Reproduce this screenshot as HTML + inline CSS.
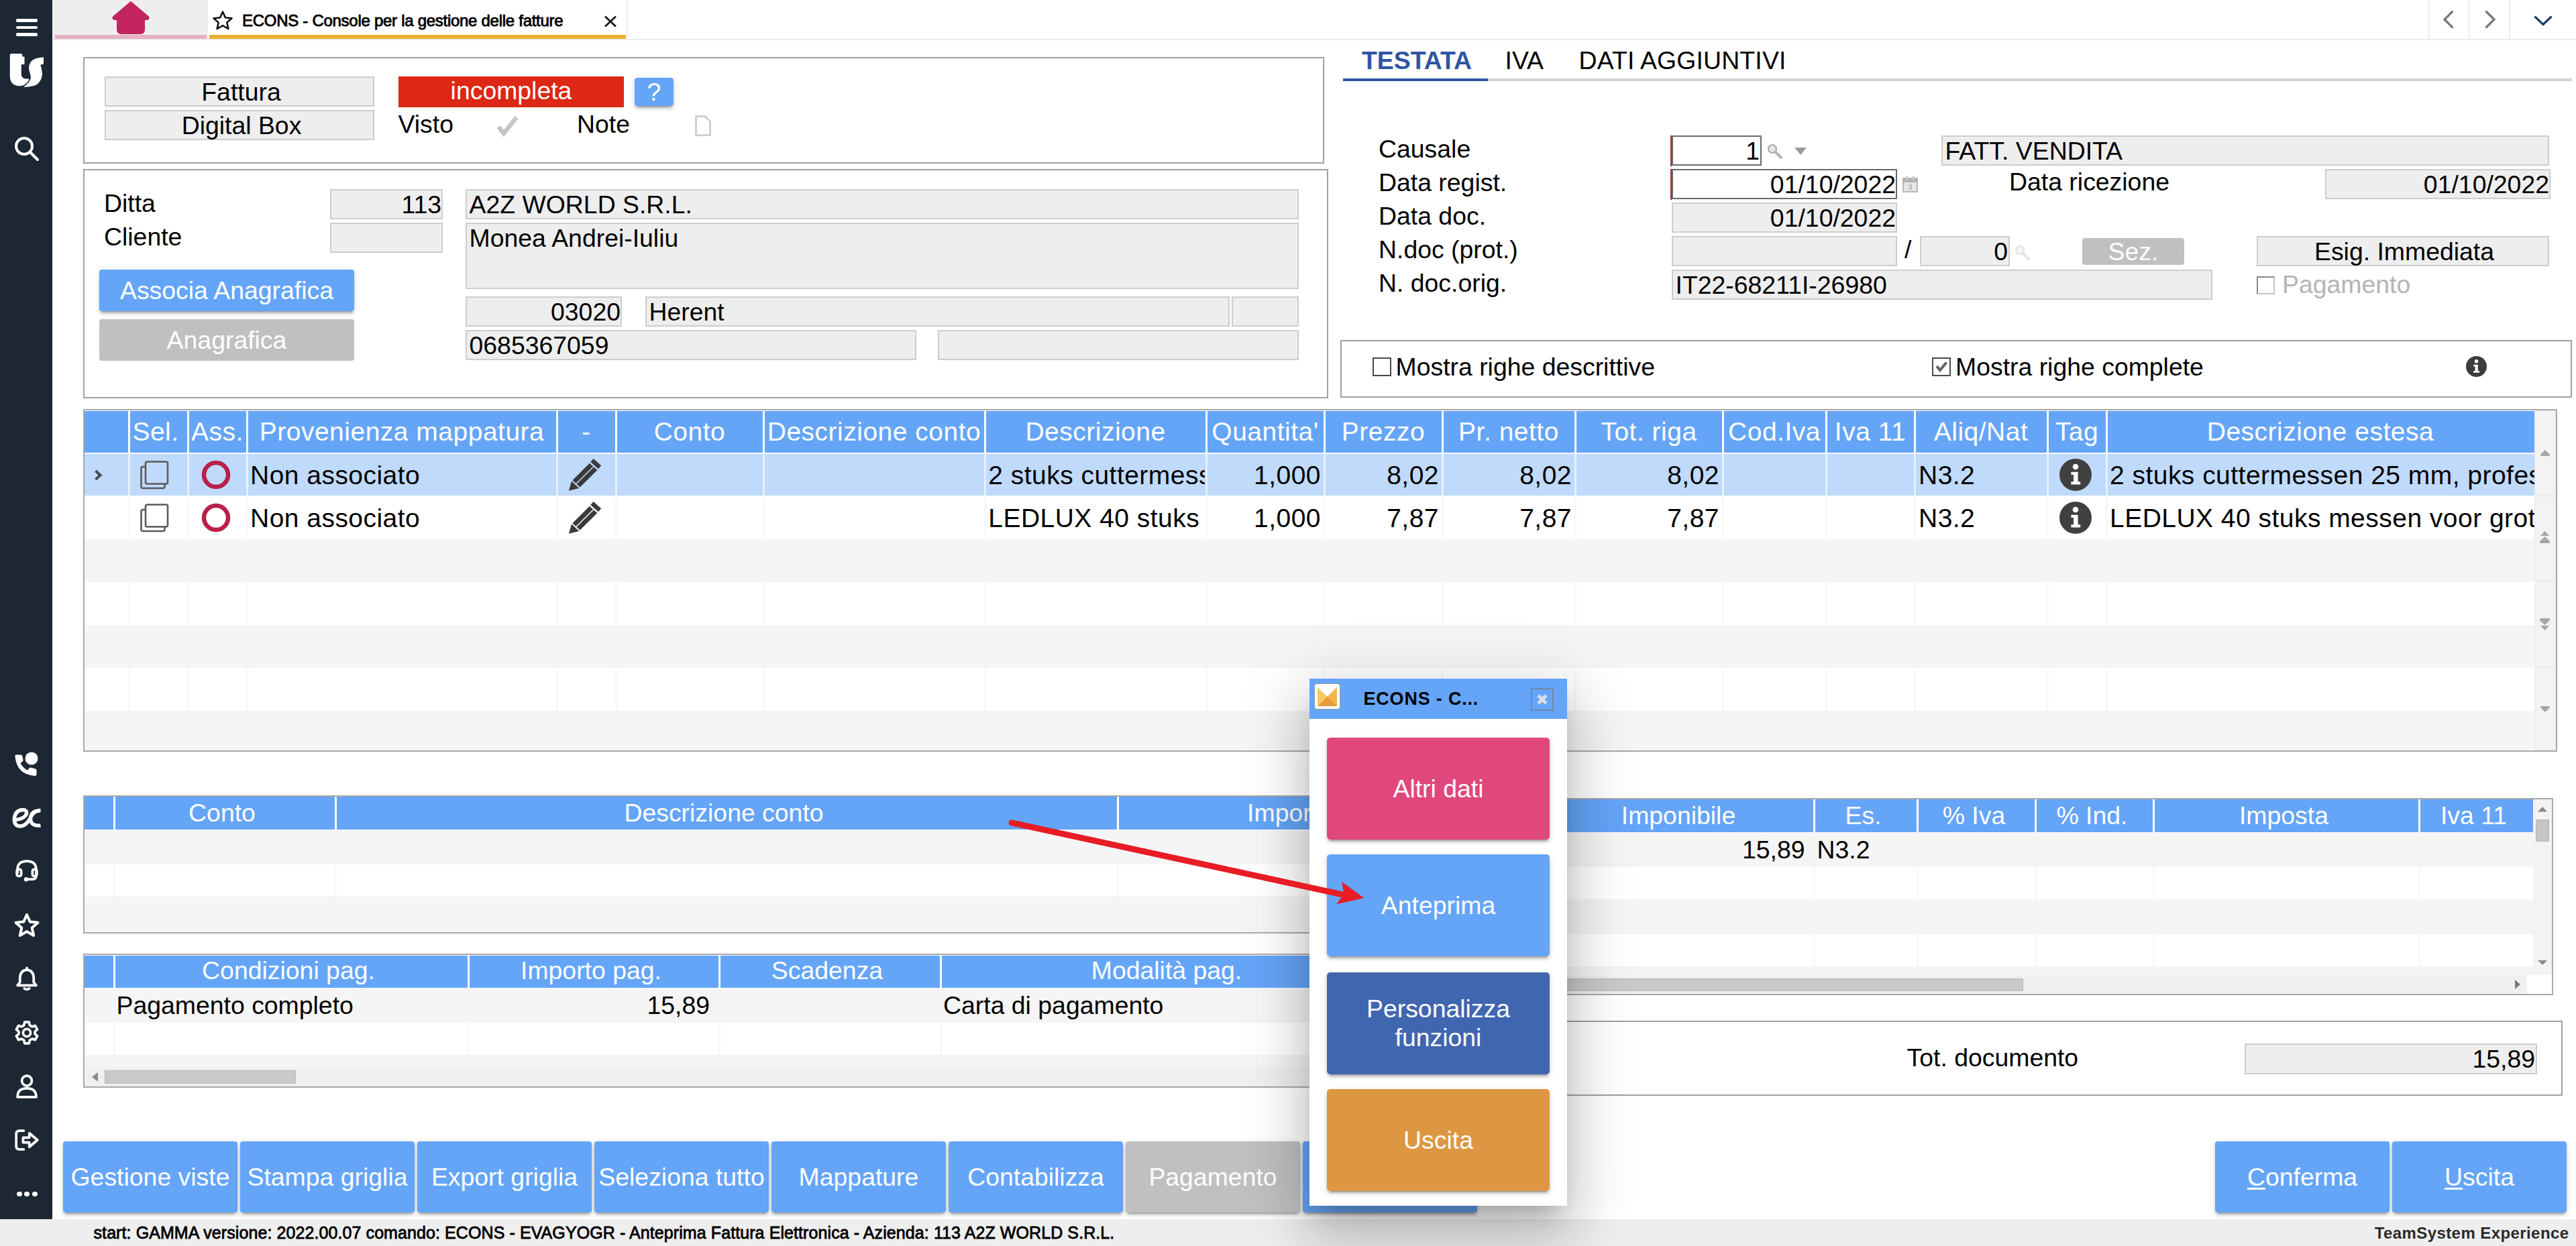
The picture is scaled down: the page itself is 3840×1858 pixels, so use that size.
<!DOCTYPE html>
<html><head><meta charset="utf-8"><title>ECONS</title>
<style>
html,body{margin:0;padding:0;}
body{width:3840px;height:1858px;position:relative;overflow:hidden;background:#fff;font-family:"Liberation Sans",sans-serif;}
div{position:absolute;box-sizing:border-box;}
.t{white-space:nowrap;}
svg{position:absolute;overflow:visible;}
.btn{background:#65a5f8;color:#fff;border-radius:4px;box-shadow:0 6px 2px -4px rgba(0,0,0,.2),0 4px 4px 0 rgba(0,0,0,.14),0 2px 10px 0 rgba(0,0,0,.12);text-align:center;white-space:nowrap;}
</style></head><body>
<div style="left:78px;top:0px;width:3762px;height:58px;background:#fff;"></div>
<div style="left:78px;top:58px;width:3762px;height:2px;background:#ececec;"></div>
<div style="left:78px;top:0px;width:232px;height:58px;background:#eeeeee;"></div>
<div style="left:82px;top:52px;width:226px;height:6px;background:#e4b1c5;"></div>
<svg style="left:166px;top:0px" width="58" height="52" viewBox="0 0 58 52"><path d="M29 3 L55 25 Q57 28 53 29 L49 29 L49 44 Q49 50 43 50 L15 50 Q9 50 9 44 L9 29 L5 29 Q1 28 3 25 Z" fill="#c2255f" stroke="#c2255f" stroke-width="2" stroke-linejoin="round"/></svg>
<div style="left:312px;top:52px;width:621px;height:6px;background:#e9b030;"></div>
<div style="left:934px;top:0px;width:2px;height:58px;background:#f0f0f0;"></div>
<svg style="left:316px;top:15px" width="32" height="30" viewBox="0 0 32 30"><path d="M16 2.5 L19.9 11.2 L29.5 12.2 L22.3 18.6 L24.4 28 L16 23.1 L7.6 28 L9.7 18.6 L2.5 12.2 L12.1 11.2 Z" fill="none" stroke="#111" stroke-width="2.6" stroke-linejoin="round"/></svg>
<div class="t" style="left:361px;top:18.6px;font-size:24px;line-height:24px;color:#000;letter-spacing:-0.28px;-webkit-text-stroke:0.85px #000;">ECONS - Console per la gestione delle fatture</div>
<svg style="left:900px;top:23px" width="20" height="18" viewBox="0 0 20 18"><path d="M2 1.5 L18 16.5 M18 1.5 L2 16.5" stroke="#111" stroke-width="2.6" fill="none"/></svg>
<div style="left:3620px;top:0px;width:2px;height:58px;background:#eeeeee;"></div>
<div style="left:3680px;top:0px;width:2px;height:58px;background:#eeeeee;"></div>
<div style="left:3740px;top:0px;width:2px;height:58px;background:#eeeeee;"></div>
<svg style="left:3640px;top:14px" width="20" height="30" viewBox="0 0 20 30"><path d="M15.5 3.5 L4 15 L15.5 26.5" stroke="#777" stroke-width="3.2" stroke-linecap="round" fill="none"/></svg>
<svg style="left:3702px;top:14px" width="20" height="30" viewBox="0 0 20 30"><path d="M4.5 3.5 L16 15 L4.5 26.5" stroke="#777" stroke-width="3.2" stroke-linecap="round" fill="none"/></svg>
<svg style="left:3776px;top:22px" width="30" height="18" viewBox="0 0 30 18"><path d="M3.5 3.5 L15 14.5 L26.5 3.5" stroke="#1f4166" stroke-width="3.4" stroke-linecap="round" fill="none"/></svg>
<div style="left:0px;top:0px;width:78px;height:1818px;background:#1c2733;"></div>
<div style="left:24px;top:28px;width:32px;height:4.5px;background:#fff;border-radius:2px;"></div>
<div style="left:24px;top:38.5px;width:32px;height:4.5px;background:#fff;border-radius:2px;"></div>
<div style="left:24px;top:49px;width:32px;height:4.5px;background:#fff;border-radius:2px;"></div>
<svg style="left:0px;top:60px" width="100" height="90" viewBox="0 0 100 90"><path d="M16.5 20 L31.5 20 Q33.2 20 33.2 21.7 L33.2 24.6 L36.5 24.6 L36.5 36 L31.8 36 L31.8 50 Q31.8 57 38 57.5 L43.5 57.5 Q42 64 34 67.5 Q30 68.5 26 68 Q15 66 14.8 54 L14.8 22 Q14.8 20 16.5 20 Z" fill="#fff"/><path d="M65 25.3 L65 35.5 L60.3 36.8 Q62.5 43 63 50 Q62.5 60 55 66 Q47 70 34.7 69.7 Q44 64 46 56 Q45.5 50 43.5 45 Q42 38 46 32 Q51 26 65 25.3 Z" fill="#fff"/></svg>
<svg style="left:20px;top:202px" width="40" height="40" viewBox="0 0 40 40"><circle cx="16" cy="16" r="12" fill="none" stroke="#fff" stroke-width="4" stroke-linecap="round" stroke-linejoin="round"/><path d="M25 25 L36 36" fill="none" stroke="#fff" stroke-width="4" stroke-linecap="round" stroke-linejoin="round"/></svg>
<svg style="left:0px;top:1100px" width="100" height="80" viewBox="0 0 100 80"><path d="M22.5 28 Q22 25.5 24.5 25.5 L31 25.5 Q33 25.5 33.3 27.5 L34.5 33 Q34.8 34.5 33.5 35.5 L30.5 38 Q34 45 41 48.5 L43.5 45.5 Q44.5 44.3 46 44.7 L52.5 46.3 Q54.5 46.8 54.5 48.8 L54.5 54.5 Q54.5 57 52 57 Q25 55 22.5 28 Z" fill="#fff"/><circle cx="47" cy="31" r="9.5" fill="#fff"/></svg>
<svg style="left:0px;top:1190px" width="100" height="60" viewBox="0 0 100 60"><path d="M23 32.5 Q37 31 39.5 23.5 Q40.5 17.5 33.5 17.5 Q22.5 18.5 21.2 31 Q21.2 42 30 42 Q38 42 44 32 Q49 20 59.5 18.2" fill="none" stroke="#fff" stroke-width="5.4" stroke-linecap="butt"/><path d="M60.5 19 Q46 18 45.5 31 Q46 42.5 60.5 41" fill="none" stroke="#fff" stroke-width="5.4"/></svg>
<svg style="left:20px;top:1280px" width="40" height="40" viewBox="-1.5 -1.5 43 43"><path d="M5 22 L5 17 Q5 3 20 3 Q35 3 35 17 L35 26 Q35 32 29 32 L22 32" fill="none" stroke="#fff" stroke-width="4" stroke-linecap="round" stroke-linejoin="round"/><rect x="4" y="16" width="7" height="11" rx="3" fill="none" stroke="#fff" stroke-width="4" stroke-linecap="round" stroke-linejoin="round"/><rect x="29" y="16" width="7" height="11" rx="3" fill="none" stroke="#fff" stroke-width="4" stroke-linecap="round" stroke-linejoin="round"/><circle cx="19" cy="32" r="3.5" fill="#fff"/></svg>
<svg style="left:20px;top:1360px" width="40" height="40" viewBox="0 0 40 40"><path d="M20 4 L24.8 14.6 L36.5 15.8 L27.7 23.6 L30.2 35 L20 29.1 L9.8 35 L12.3 23.6 L3.5 15.8 L15.2 14.6 Z" fill="none" stroke="#fff" stroke-width="4" stroke-linecap="round" stroke-linejoin="round"/></svg>
<svg style="left:20px;top:1440px" width="40" height="40" viewBox="-1.5 -1.5 43 43"><path d="M20 5 Q9 6 9 19 L9 25 L5 30 L35 30 L31 25 L31 19 Q31 6 20 5 Z" fill="none" stroke="#fff" stroke-width="4" stroke-linecap="round" stroke-linejoin="round"/><path d="M16 35 Q20 38 24 35" fill="none" stroke="#fff" stroke-width="4" stroke-linecap="round" stroke-linejoin="round"/><path d="M20 2 L20 5" fill="none" stroke="#fff" stroke-width="4" stroke-linecap="round" stroke-linejoin="round"/></svg>
<svg style="left:20px;top:1520px" width="40" height="40" viewBox="-1.5 -1.5 43 43"><path d="M16.5 3 L23.5 3 L24.6 8 L28.4 10.2 L33.3 8.6 L36.8 14.7 L33 18 L33 22 L36.8 25.3 L33.3 31.4 L28.4 29.8 L24.6 32 L23.5 37 L16.5 37 L15.4 32 L11.6 29.8 L6.7 31.4 L3.2 25.3 L7 22 L7 18 L3.2 14.7 L6.7 8.6 L11.6 10.2 L15.4 8 Z" fill="none" stroke="#fff" stroke-width="4" stroke-linecap="round" stroke-linejoin="round"/><circle cx="20" cy="20" r="6" fill="none" stroke="#fff" stroke-width="4" stroke-linecap="round" stroke-linejoin="round"/></svg>
<svg style="left:20px;top:1600px" width="40" height="40" viewBox="-1.5 -1.5 43 43"><circle cx="20" cy="11" r="8" fill="none" stroke="#fff" stroke-width="4" stroke-linecap="round" stroke-linejoin="round"/><path d="M5 37 Q5 23 20 23 Q35 23 35 37 Z" fill="none" stroke="#fff" stroke-width="4" stroke-linecap="round" stroke-linejoin="round"/></svg>
<svg style="left:20px;top:1680px" width="40" height="40" viewBox="-1.5 -1.5 43 43"><path d="M15 5 L8 5 Q3 5 3 10 L3 30 Q3 35 8 35 L15 35" fill="none" stroke="#fff" stroke-width="4" stroke-linecap="round" stroke-linejoin="round"/><path d="M14 16 L24 16 L24 9 L37 20 L24 31 L24 24 L14 24 Z" fill="none" stroke="#fff" stroke-width="4" stroke-linecap="round" stroke-linejoin="round"/></svg>
<div style="left:25px;top:1776.6px;width:7.6px;height:7.6px;background:#fff;border-radius:4px;"></div>
<div style="left:36.4px;top:1776.6px;width:7.6px;height:7.6px;background:#fff;border-radius:4px;"></div>
<div style="left:48px;top:1776.6px;width:7.6px;height:7.6px;background:#fff;border-radius:4px;"></div>
<div style="left:0px;top:1818px;width:3840px;height:40px;background:#eeeeee;"></div>
<div class="t" style="left:139.5px;top:1825.8px;font-size:25px;line-height:25px;color:#000;letter-spacing:0.09px;-webkit-text-stroke:0.8px #000;">start: GAMMA versione: 2022.00.07 comando: ECONS - EVAGYOGR - Anteprima Fattura Elettronica - Azienda: 113 A2Z WORLD S.R.L.</div>
<div class="t" style="left:3400px;top:1826.5px;font-size:24px;line-height:24px;color:#2a2a2a;width:429.5px;text-align:right;font-weight:bold;letter-spacing:0.42px;">TeamSystem Experience</div>
<div style="left:124px;top:85px;width:1850px;height:159px;border:2px solid #a0a0a0;"></div>
<div style="left:156px;top:114px;width:402px;height:45px;background:#eee;border:2px solid #cdcdcd;box-sizing:border-box;"></div>
<div class="t" style="left:158.5px;top:118.5px;font-size:37.4px;line-height:37.4px;color:#000;width:402px;text-align:center;">Fattura</div>
<div style="left:156px;top:164px;width:402px;height:45px;background:#eee;border:2px solid #cdcdcd;box-sizing:border-box;"></div>
<div class="t" style="left:159px;top:168.5px;font-size:37.4px;line-height:37.4px;color:#000;width:402px;text-align:center;">Digital Box</div>
<div style="left:594px;top:114px;width:336px;height:46px;background:#dc2814;"></div>
<div class="t" style="left:594px;top:117px;font-size:37.4px;line-height:37.4px;color:#fff;width:336px;text-align:center;">incompleta</div>
<div class="btn" style="left:946px;top:116px;width:58px;height:42px;border-radius:4px;"></div>
<div class="t" style="left:946px;top:118.5px;font-size:37.4px;line-height:37.4px;color:#fff;width:58px;text-align:center;">?</div>
<div class="t" style="left:593.5px;top:167px;font-size:37.4px;line-height:37.4px;color:#000;">Visto</div>
<svg style="left:741px;top:172px" width="32" height="30" viewBox="0 0 32 30"><path d="M2 17 L10 27 L29 3" stroke="#c4c4c4" stroke-width="6.5" fill="none"/></svg>
<div class="t" style="left:860px;top:167px;font-size:37.4px;line-height:37.4px;color:#000;">Note</div>
<svg style="left:1036px;top:172px" width="24" height="31" viewBox="0 0 24 31"><path d="M1.5 1.5 L15 1.5 L22.5 9 L22.5 29.5 L1.5 29.5 Z" fill="#fff" stroke="#d0d0d0" stroke-width="3"/></svg>
<div style="left:124px;top:252px;width:1856px;height:342px;border:2px solid #a0a0a0;"></div>
<div class="t" style="left:155px;top:285px;font-size:37.4px;line-height:37.4px;color:#000;">Ditta</div>
<div class="t" style="left:155px;top:335px;font-size:37.4px;line-height:37.4px;color:#000;">Cliente</div>
<div style="left:492px;top:282px;width:168px;height:45px;background:#eee;border:2px solid #cdcdcd;box-sizing:border-box;"></div>
<div class="t" style="left:492px;top:286.5px;font-size:37.4px;line-height:37.4px;color:#000;width:166px;text-align:right;">113</div>
<div style="left:492px;top:332px;width:168px;height:45px;background:#eee;border:2px solid #cdcdcd;box-sizing:border-box;"></div>
<div style="left:694px;top:282px;width:1242px;height:45px;background:#eee;border:2px solid #cdcdcd;box-sizing:border-box;"></div>
<div class="t" style="left:699.5px;top:286.5px;font-size:37.4px;line-height:37.4px;color:#000;">A2Z WORLD S.R.L.</div>
<div style="left:694px;top:332px;width:1242px;height:99px;background:#eee;border:2px solid #cdcdcd;box-sizing:border-box;"></div>
<div class="t" style="left:699.5px;top:336.5px;font-size:37.4px;line-height:37.4px;color:#000;">Monea Andrei-Iuliu</div>
<div style="left:694px;top:442px;width:233px;height:45px;background:#eee;border:2px solid #cdcdcd;box-sizing:border-box;"></div>
<div class="t" style="left:694px;top:446.5px;font-size:37.4px;line-height:37.4px;color:#000;width:231px;text-align:right;">03020</div>
<div style="left:962px;top:442px;width:871px;height:45px;background:#eee;border:2px solid #cdcdcd;box-sizing:border-box;"></div>
<div class="t" style="left:967.5px;top:446.5px;font-size:37.4px;line-height:37.4px;color:#000;">Herent</div>
<div style="left:1836px;top:442px;width:100px;height:45px;background:#eee;border:2px solid #cdcdcd;box-sizing:border-box;"></div>
<div style="left:694px;top:492px;width:672px;height:45px;background:#eee;border:2px solid #cdcdcd;box-sizing:border-box;"></div>
<div class="t" style="left:699.5px;top:496.5px;font-size:37.4px;line-height:37.4px;color:#000;">0685367059</div>
<div style="left:1398px;top:492px;width:538px;height:45px;background:#eee;border:2px solid #cdcdcd;box-sizing:border-box;"></div>
<div class="btn" style="left:148px;top:402px;width:380px;height:62px;"></div>
<div class="t" style="left:148px;top:414.5px;font-size:37.4px;line-height:37.4px;color:#fff;width:380px;text-align:center;">Associa Anagrafica</div>
<div class="btn" style="left:148px;top:476px;width:380px;height:62px;background:#c0c0c0;box-shadow:none;"></div>
<div class="t" style="left:148px;top:489px;font-size:37.4px;line-height:37.4px;color:#fff;width:380px;text-align:center;">Anagrafica</div>
<div class="t" style="left:2030px;top:72.3px;font-size:37.4px;line-height:37.4px;color:#2f55a4;font-weight:bold;">TESTATA</div>
<div class="t" style="left:2243.5px;top:72.3px;font-size:37.4px;line-height:37.4px;color:#000;">IVA</div>
<div class="t" style="left:2353.5px;top:72.3px;font-size:37.4px;line-height:37.4px;color:#000;letter-spacing:0.15px;">DATI AGGIUNTIVI</div>
<div style="left:2002px;top:117px;width:1832px;height:4px;background:#d2d2d2;"></div>
<div style="left:2002px;top:117px;width:216px;height:4px;background:#2f55a4;"></div>
<div class="t" style="left:2055px;top:204px;font-size:37.4px;line-height:37.4px;color:#000;">Causale</div>
<div class="t" style="left:2055px;top:254.4px;font-size:37.4px;line-height:37.4px;color:#000;">Data regist.</div>
<div class="t" style="left:2055px;top:304px;font-size:37.4px;line-height:37.4px;color:#000;">Data doc.</div>
<div class="t" style="left:2055px;top:354px;font-size:37.4px;line-height:37.4px;color:#000;">N.doc (prot.)</div>
<div class="t" style="left:2055px;top:404px;font-size:37.4px;line-height:37.4px;color:#000;">N. doc.orig.</div>
<div style="left:2490px;top:202px;width:1.5px;height:46px;background:#a83232;"></div>
<div style="left:2492px;top:202px;width:134px;height:45px;background:#fff;border:2px solid #6a6a6a;"></div>
<div class="t" style="left:2492px;top:206.5px;font-size:37.4px;line-height:37.4px;color:#000;width:131px;text-align:right;">1</div>
<svg style="left:2634px;top:214px" width="24" height="24" viewBox="0 0 24 24"><circle cx="8" cy="8" r="6" fill="#e8e8e8" stroke="#aaa" stroke-width="2.2"/><path d="M13 13 L21 21" stroke="#b5b5b5" stroke-width="4" stroke-linecap="round"/></svg>
<svg style="left:2674px;top:219px" width="20" height="13" viewBox="0 0 20 13"><path d="M1 1 L19 1 L10 12 Z" fill="#9a9a9a"/></svg>
<div style="left:2894px;top:202px;width:906px;height:45px;background:#eee;border:2px solid #cdcdcd;box-sizing:border-box;"></div>
<div class="t" style="left:2899.5px;top:206.5px;font-size:37.4px;line-height:37.4px;color:#000;">FATT. VENDITA</div>
<div style="left:2490px;top:252px;width:1.5px;height:46px;background:#a83232;"></div>
<div style="left:2492px;top:252px;width:336px;height:45px;background:#fff;border:2px solid #6a6a6a;"></div>
<div class="t" style="left:2492px;top:256.5px;font-size:37.4px;line-height:37.4px;color:#000;width:334px;text-align:right;">01/10/2022</div>
<svg style="left:2836px;top:263px" width="23" height="24" viewBox="0 0 23 24"><rect x="1" y="3" width="21" height="20" fill="#e6e6e6" stroke="#b8b8b8" stroke-width="2"/><rect x="1" y="3" width="21" height="6" fill="#b0b0b0"/><rect x="5" y="0" width="3" height="6" fill="#c8c8c8"/><rect x="15" y="0" width="3" height="6" fill="#c8c8c8"/><text x="11.5" y="20" font-size="11" font-weight="bold" text-anchor="middle" fill="#b0b0b0" font-family="Liberation Sans">3</text></svg>
<div class="t" style="left:2995px;top:252.7px;font-size:37.4px;line-height:37.4px;color:#000;">Data ricezione</div>
<div style="left:3466px;top:252px;width:336px;height:45px;background:#eee;border:2px solid #cdcdcd;box-sizing:border-box;"></div>
<div class="t" style="left:3466px;top:256.5px;font-size:37.4px;line-height:37.4px;color:#000;width:334px;text-align:right;">01/10/2022</div>
<div style="left:2492px;top:302px;width:336px;height:45px;background:#eee;border:2px solid #cdcdcd;box-sizing:border-box;"></div>
<div class="t" style="left:2492px;top:306.5px;font-size:37.4px;line-height:37.4px;color:#000;width:334px;text-align:right;">01/10/2022</div>
<div style="left:2492px;top:352px;width:336px;height:45px;background:#eee;border:2px solid #cdcdcd;box-sizing:border-box;"></div>
<div class="t" style="left:2839px;top:354px;font-size:37.4px;line-height:37.4px;color:#000;">/</div>
<div style="left:2862px;top:352px;width:134px;height:45px;background:#eee;border:2px solid #cdcdcd;box-sizing:border-box;"></div>
<div class="t" style="left:2862px;top:356.5px;font-size:37.4px;line-height:37.4px;color:#000;width:131px;text-align:right;">0</div>
<svg style="left:3003px;top:365px" width="24" height="24" viewBox="0 0 24 24"><circle cx="8" cy="8" r="6" fill="#f4f4f4" stroke="#e2e2e2" stroke-width="2.2"/><path d="M13 13 L21 21" stroke="#e4e4e4" stroke-width="4" stroke-linecap="round"/></svg>
<div style="left:3104px;top:354.5px;width:152px;height:40px;background:#c0c0c0;border-radius:4px;"></div>
<div class="t" style="left:3104px;top:357px;font-size:37.4px;line-height:37.4px;color:#fff;width:152px;text-align:center;">Sez.</div>
<div style="left:3364px;top:352px;width:436px;height:45px;background:#eee;border:2px solid #cdcdcd;box-sizing:border-box;"></div>
<div class="t" style="left:3366px;top:356.5px;font-size:37.4px;line-height:37.4px;color:#000;width:436px;text-align:center;">Esig. Immediata</div>
<div style="left:2492px;top:402px;width:806px;height:45px;background:#eee;border:2px solid #cdcdcd;box-sizing:border-box;"></div>
<div class="t" style="left:2497.5px;top:406.5px;font-size:37.4px;line-height:37.4px;color:#000;">IT22-68211I-26980</div>
<div style="left:3364px;top:411.5px;width:27px;height:27px;background:#fff;border:2px solid #c4c4c4;border-top-color:#888;border-left-color:#888;"></div>
<div class="t" style="left:3402px;top:406px;font-size:37.4px;line-height:37.4px;color:#b4b4b4;">Pagamento</div>
<div style="left:1998px;top:507px;width:1836px;height:86px;border:2px solid #a0a0a0;"></div>
<div style="left:2046px;top:533px;width:28px;height:27.5px;background:#fff;border:2px solid #4a4a4a;"></div>
<div class="t" style="left:2080.5px;top:529px;font-size:37.4px;line-height:37.4px;color:#000;">Mostra righe descrittive</div>
<div style="left:2880px;top:533px;width:28px;height:27.5px;background:#fff;border:2px solid #4a4a4a;"></div>
<svg style="left:2880px;top:533px" width="28" height="27" viewBox="0 0 28 27"><path d="M7 13 L12 19 L21.5 7.5" stroke="#666" stroke-width="4.2" fill="none"/></svg>
<div class="t" style="left:2915px;top:529px;font-size:37.4px;line-height:37.4px;color:#000;">Mostra righe complete</div>
<svg style="left:3676px;top:531px" width="31" height="31" viewBox="0 0 40 40"><circle cx="20" cy="20" r="20" fill="#3c3c3c"/><circle cx="20" cy="10" r="3.6" fill="#fff"/><path d="M14.5 16.5 L23 16.5 L23 28.5 L26 28.5 L26 32 L14.5 32 L14.5 28.5 L17.5 28.5 L17.5 20 L14.5 20 Z" fill="#fff"/></svg>
<div style="left:124px;top:610px;width:3688px;height:511px;border:2px solid #a8a8a8;background:#fff;"></div>
<div style="left:126px;top:612.5px;width:3652px;height:62px;background:#65a5f8;"></div>
<div style="left:126px;top:676.5px;width:3652px;height:62.5px;background:#c0dafc;"></div>
<div style="left:126px;top:804px;width:3652px;height:64px;background:#f5f5f5;"></div>
<div style="left:126px;top:932px;width:3652px;height:64px;background:#f5f5f5;"></div>
<div style="left:126px;top:1060px;width:3652px;height:59px;background:#f5f5f5;"></div>
<div style="left:191px;top:612.5px;width:3px;height:62px;background:#fff;"></div>
<div style="left:191px;top:676.5px;width:3px;height:62.5px;background:#e6f0fe;"></div>
<div style="left:191px;top:740px;width:3px;height:64px;background:#f8f8f8;"></div>
<div style="left:191px;top:868px;width:3px;height:64px;background:#f8f8f8;"></div>
<div style="left:191px;top:996px;width:3px;height:64px;background:#f8f8f8;"></div>
<div style="left:279px;top:612.5px;width:3px;height:62px;background:#fff;"></div>
<div style="left:279px;top:676.5px;width:3px;height:62.5px;background:#e6f0fe;"></div>
<div style="left:279px;top:740px;width:3px;height:64px;background:#f8f8f8;"></div>
<div style="left:279px;top:868px;width:3px;height:64px;background:#f8f8f8;"></div>
<div style="left:279px;top:996px;width:3px;height:64px;background:#f8f8f8;"></div>
<div style="left:367px;top:612.5px;width:3px;height:62px;background:#fff;"></div>
<div style="left:367px;top:676.5px;width:3px;height:62.5px;background:#e6f0fe;"></div>
<div style="left:367px;top:740px;width:3px;height:64px;background:#f8f8f8;"></div>
<div style="left:367px;top:868px;width:3px;height:64px;background:#f8f8f8;"></div>
<div style="left:367px;top:996px;width:3px;height:64px;background:#f8f8f8;"></div>
<div style="left:829px;top:612.5px;width:3px;height:62px;background:#fff;"></div>
<div style="left:829px;top:676.5px;width:3px;height:62.5px;background:#e6f0fe;"></div>
<div style="left:829px;top:740px;width:3px;height:64px;background:#f8f8f8;"></div>
<div style="left:829px;top:868px;width:3px;height:64px;background:#f8f8f8;"></div>
<div style="left:829px;top:996px;width:3px;height:64px;background:#f8f8f8;"></div>
<div style="left:917px;top:612.5px;width:3px;height:62px;background:#fff;"></div>
<div style="left:917px;top:676.5px;width:3px;height:62.5px;background:#e6f0fe;"></div>
<div style="left:917px;top:740px;width:3px;height:64px;background:#f8f8f8;"></div>
<div style="left:917px;top:868px;width:3px;height:64px;background:#f8f8f8;"></div>
<div style="left:917px;top:996px;width:3px;height:64px;background:#f8f8f8;"></div>
<div style="left:1137px;top:612.5px;width:3px;height:62px;background:#fff;"></div>
<div style="left:1137px;top:676.5px;width:3px;height:62.5px;background:#e6f0fe;"></div>
<div style="left:1137px;top:740px;width:3px;height:64px;background:#f8f8f8;"></div>
<div style="left:1137px;top:868px;width:3px;height:64px;background:#f8f8f8;"></div>
<div style="left:1137px;top:996px;width:3px;height:64px;background:#f8f8f8;"></div>
<div style="left:1467px;top:612.5px;width:3px;height:62px;background:#fff;"></div>
<div style="left:1467px;top:676.5px;width:3px;height:62.5px;background:#e6f0fe;"></div>
<div style="left:1467px;top:740px;width:3px;height:64px;background:#f8f8f8;"></div>
<div style="left:1467px;top:868px;width:3px;height:64px;background:#f8f8f8;"></div>
<div style="left:1467px;top:996px;width:3px;height:64px;background:#f8f8f8;"></div>
<div style="left:1797px;top:612.5px;width:3px;height:62px;background:#fff;"></div>
<div style="left:1797px;top:676.5px;width:3px;height:62.5px;background:#e6f0fe;"></div>
<div style="left:1797px;top:740px;width:3px;height:64px;background:#f8f8f8;"></div>
<div style="left:1797px;top:868px;width:3px;height:64px;background:#f8f8f8;"></div>
<div style="left:1797px;top:996px;width:3px;height:64px;background:#f8f8f8;"></div>
<div style="left:1973px;top:612.5px;width:3px;height:62px;background:#fff;"></div>
<div style="left:1973px;top:676.5px;width:3px;height:62.5px;background:#e6f0fe;"></div>
<div style="left:1973px;top:740px;width:3px;height:64px;background:#f8f8f8;"></div>
<div style="left:1973px;top:868px;width:3px;height:64px;background:#f8f8f8;"></div>
<div style="left:1973px;top:996px;width:3px;height:64px;background:#f8f8f8;"></div>
<div style="left:2149px;top:612.5px;width:3px;height:62px;background:#fff;"></div>
<div style="left:2149px;top:676.5px;width:3px;height:62.5px;background:#e6f0fe;"></div>
<div style="left:2149px;top:740px;width:3px;height:64px;background:#f8f8f8;"></div>
<div style="left:2149px;top:868px;width:3px;height:64px;background:#f8f8f8;"></div>
<div style="left:2149px;top:996px;width:3px;height:64px;background:#f8f8f8;"></div>
<div style="left:2347px;top:612.5px;width:3px;height:62px;background:#fff;"></div>
<div style="left:2347px;top:676.5px;width:3px;height:62.5px;background:#e6f0fe;"></div>
<div style="left:2347px;top:740px;width:3px;height:64px;background:#f8f8f8;"></div>
<div style="left:2347px;top:868px;width:3px;height:64px;background:#f8f8f8;"></div>
<div style="left:2347px;top:996px;width:3px;height:64px;background:#f8f8f8;"></div>
<div style="left:2567px;top:612.5px;width:3px;height:62px;background:#fff;"></div>
<div style="left:2567px;top:676.5px;width:3px;height:62.5px;background:#e6f0fe;"></div>
<div style="left:2567px;top:740px;width:3px;height:64px;background:#f8f8f8;"></div>
<div style="left:2567px;top:868px;width:3px;height:64px;background:#f8f8f8;"></div>
<div style="left:2567px;top:996px;width:3px;height:64px;background:#f8f8f8;"></div>
<div style="left:2721px;top:612.5px;width:3px;height:62px;background:#fff;"></div>
<div style="left:2721px;top:676.5px;width:3px;height:62.5px;background:#e6f0fe;"></div>
<div style="left:2721px;top:740px;width:3px;height:64px;background:#f8f8f8;"></div>
<div style="left:2721px;top:868px;width:3px;height:64px;background:#f8f8f8;"></div>
<div style="left:2721px;top:996px;width:3px;height:64px;background:#f8f8f8;"></div>
<div style="left:2853px;top:612.5px;width:3px;height:62px;background:#fff;"></div>
<div style="left:2853px;top:676.5px;width:3px;height:62.5px;background:#e6f0fe;"></div>
<div style="left:2853px;top:740px;width:3px;height:64px;background:#f8f8f8;"></div>
<div style="left:2853px;top:868px;width:3px;height:64px;background:#f8f8f8;"></div>
<div style="left:2853px;top:996px;width:3px;height:64px;background:#f8f8f8;"></div>
<div style="left:3051px;top:612.5px;width:3px;height:62px;background:#fff;"></div>
<div style="left:3051px;top:676.5px;width:3px;height:62.5px;background:#e6f0fe;"></div>
<div style="left:3051px;top:740px;width:3px;height:64px;background:#f8f8f8;"></div>
<div style="left:3051px;top:868px;width:3px;height:64px;background:#f8f8f8;"></div>
<div style="left:3051px;top:996px;width:3px;height:64px;background:#f8f8f8;"></div>
<div style="left:3139px;top:612.5px;width:3px;height:62px;background:#fff;"></div>
<div style="left:3139px;top:676.5px;width:3px;height:62.5px;background:#e6f0fe;"></div>
<div style="left:3139px;top:740px;width:3px;height:64px;background:#f8f8f8;"></div>
<div style="left:3139px;top:868px;width:3px;height:64px;background:#f8f8f8;"></div>
<div style="left:3139px;top:996px;width:3px;height:64px;background:#f8f8f8;"></div>
<div class="t" style="left:188px;top:624.3px;font-size:39px;line-height:39px;color:#fff;width:88px;text-align:center;letter-spacing:0.5px;">Sel.</div>
<div class="t" style="left:280px;top:624.3px;font-size:39px;line-height:39px;color:#fff;width:88px;text-align:center;letter-spacing:0.5px;">Ass.</div>
<div class="t" style="left:368px;top:624.3px;font-size:39px;line-height:39px;color:#fff;width:462px;text-align:center;letter-spacing:0.5px;">Provenienza mappatura</div>
<div class="t" style="left:830px;top:624.3px;font-size:39px;line-height:39px;color:#fff;width:88px;text-align:center;letter-spacing:0.5px;">-</div>
<div class="t" style="left:918px;top:624.3px;font-size:39px;line-height:39px;color:#fff;width:220px;text-align:center;letter-spacing:0.5px;">Conto</div>
<div class="t" style="left:1138px;top:624.3px;font-size:39px;line-height:39px;color:#fff;width:330px;text-align:center;letter-spacing:0.5px;">Descrizione conto</div>
<div class="t" style="left:1468px;top:624.3px;font-size:39px;line-height:39px;color:#fff;width:330px;text-align:center;letter-spacing:0.5px;">Descrizione</div>
<div class="t" style="left:1798px;top:624.3px;font-size:39px;line-height:39px;color:#fff;width:176px;text-align:center;letter-spacing:0.5px;">Quantita'</div>
<div class="t" style="left:1974px;top:624.3px;font-size:39px;line-height:39px;color:#fff;width:176px;text-align:center;letter-spacing:0.5px;">Prezzo</div>
<div class="t" style="left:2150px;top:624.3px;font-size:39px;line-height:39px;color:#fff;width:198px;text-align:center;letter-spacing:0.5px;">Pr. netto</div>
<div class="t" style="left:2348px;top:624.3px;font-size:39px;line-height:39px;color:#fff;width:220px;text-align:center;letter-spacing:0.5px;">Tot. riga</div>
<div class="t" style="left:2568px;top:624.3px;font-size:39px;line-height:39px;color:#fff;width:154px;text-align:center;letter-spacing:0.5px;">Cod.Iva</div>
<div class="t" style="left:2722px;top:624.3px;font-size:39px;line-height:39px;color:#fff;width:132px;text-align:center;letter-spacing:0.5px;">Iva 11</div>
<div class="t" style="left:2854px;top:624.3px;font-size:39px;line-height:39px;color:#fff;width:198px;text-align:center;letter-spacing:0.5px;">Aliq/Nat</div>
<div class="t" style="left:3052px;top:624.3px;font-size:39px;line-height:39px;color:#fff;width:88px;text-align:center;letter-spacing:0.5px;">Tag</div>
<div class="t" style="left:3140px;top:624.3px;font-size:39px;line-height:39px;color:#fff;width:638px;text-align:center;letter-spacing:0.5px;">Descrizione estesa</div>
<div style="left:3778px;top:612px;width:32px;height:507px;background:#f4f4f4;"></div>
<div style="left:3778px;top:612px;width:31.5px;height:126px;background:#f3f3f3;border:1px solid #e7e7e7;border-radius:5px;"></div>
<div style="left:3778px;top:739px;width:31.5px;height:127px;background:#f3f3f3;border:1px solid #e7e7e7;border-radius:5px;"></div>
<div style="left:3778px;top:867px;width:31.5px;height:127px;background:#f3f3f3;border:1px solid #e7e7e7;border-radius:5px;"></div>
<div style="left:3778px;top:995px;width:31.5px;height:124px;background:#f3f3f3;border:1px solid #e7e7e7;border-radius:5px;"></div>
<svg style="left:3786.5px;top:670.5px" width="14" height="7" viewBox="0 0 14 7"><path d="M0 7 L7.0 0 L14 7 Z" fill="#a6a6a6"/></svg>
<div style="left:3786.5px;top:677.5px;width:14px;height:2.5px;background:#a6a6a6;border-radius:1px;"></div>
<svg style="left:3787px;top:791.5px" width="13" height="7" viewBox="0 0 13 7"><path d="M0 7 L6.5 0 L13 7 Z" fill="#a6a6a6"/></svg>
<svg style="left:3786px;top:799.5px" width="15" height="7" viewBox="0 0 15 7"><path d="M0 7 L7.5 0 L15 7 Z" fill="#a6a6a6"/></svg>
<div style="left:3786px;top:806.5px;width:15px;height:3px;background:#a6a6a6;border-radius:1px;"></div>
<div style="left:3786px;top:921.5px;width:15px;height:3px;background:#a6a6a6;border-radius:1px;"></div>
<svg style="left:3786px;top:924.5px" width="15" height="7" viewBox="0 0 15 7"><path d="M0 0 L7.5 7 L15 0 Z" fill="#a6a6a6"/></svg>
<svg style="left:3787px;top:932.5px" width="13" height="7" viewBox="0 0 13 7"><path d="M0 0 L6.5 7 L13 0 Z" fill="#a6a6a6"/></svg>
<div style="left:3786.5px;top:1052.5px;width:14px;height:2.5px;background:#a6a6a6;border-radius:1px;"></div>
<svg style="left:3786.5px;top:1055px" width="14" height="7" viewBox="0 0 14 7"><path d="M0 0 L7.0 7 L14 0 Z" fill="#a6a6a6"/></svg>
<div class="t" style="left:373px;top:688.7px;font-size:39px;line-height:39px;color:#000;letter-spacing:0.47px;">Non associato</div>
<svg style="left:208px;top:687px" width="44" height="42" viewBox="0 0 44 42"><rect x="2.5" y="9" width="35" height="32" rx="2.5" fill="#c0dafc" stroke="#5a5a5a" stroke-width="2.6"/><rect x="9" y="1.5" width="33" height="33" rx="2.5" fill="#c0dafc" stroke="#5a5a5a" stroke-width="2.6"/></svg>
<svg style="left:300px;top:686px" width="44" height="44" viewBox="0 0 44 44"><circle cx="22" cy="22" r="18" fill="none" stroke="#b8204a" stroke-width="6.5"/></svg>
<svg style="left:847px;top:684px" width="50" height="48" viewBox="0 0 50 48"><path d="M37.6 0 L49.2 10.2 L44.9 15.2 L33.3 5 Z" fill="#3a3a3a"/><path d="M31.8 6.8 L43.4 17 L17.6 42.6 L6.4 32.2 Z" fill="#3a3a3a"/><path d="M5 33.6 L16.2 44 L0.9 47.8 Z" fill="#3a3a3a"/><path d="M37.6 11.9 L12 37.4" stroke="#c0dafc" stroke-width="1.7" opacity=".85"/></svg>
<div style="left:1473.3px;top:682.7px;width:323.2px;height:53px;overflow:hidden;"><div class="t" style="left:0;top:6px;font-size:39px;line-height:39px;letter-spacing:0.47px;">2 stuks cuttermessen</div></div>
<div class="t" style="left:1798px;top:688.7px;font-size:39px;line-height:39px;color:#000;width:171px;text-align:right;letter-spacing:0.47px;">1,000</div>
<div class="t" style="left:1974px;top:688.7px;font-size:39px;line-height:39px;color:#000;width:171px;text-align:right;letter-spacing:0.47px;">8,02</div>
<div class="t" style="left:2150px;top:688.7px;font-size:39px;line-height:39px;color:#000;width:193px;text-align:right;letter-spacing:0.47px;">8,02</div>
<div class="t" style="left:2348px;top:688.7px;font-size:39px;line-height:39px;color:#000;width:215px;text-align:right;letter-spacing:0.47px;">8,02</div>
<div class="t" style="left:2860px;top:688.7px;font-size:39px;line-height:39px;color:#000;letter-spacing:0.47px;">N3.2</div>
<svg style="left:3070px;top:684px" width="48" height="48" viewBox="0 0 40 40"><circle cx="20" cy="20" r="20" fill="#404040"/><circle cx="20" cy="10" r="3.6" fill="#fff"/><path d="M14.5 16.5 L23 16.5 L23 28.5 L26 28.5 L26 32 L14.5 32 L14.5 28.5 L17.5 28.5 L17.5 20 L14.5 20 Z" fill="#fff"/></svg>
<div style="left:3145px;top:682.7px;width:633px;height:53px;overflow:hidden;"><div class="t" style="left:0;top:6px;font-size:39px;line-height:39px;letter-spacing:0.47px;">2 stuks cuttermessen 25 mm, professionele cutter</div></div>
<div class="t" style="left:373px;top:753px;font-size:39px;line-height:39px;color:#000;letter-spacing:0.47px;">Non associato</div>
<svg style="left:208px;top:751px" width="44" height="42" viewBox="0 0 44 42"><rect x="2.5" y="9" width="35" height="32" rx="2.5" fill="#fff" stroke="#5a5a5a" stroke-width="2.6"/><rect x="9" y="1.5" width="33" height="33" rx="2.5" fill="#fff" stroke="#5a5a5a" stroke-width="2.6"/></svg>
<svg style="left:300px;top:750px" width="44" height="44" viewBox="0 0 44 44"><circle cx="22" cy="22" r="18" fill="none" stroke="#b8204a" stroke-width="6.5"/></svg>
<svg style="left:847px;top:748px" width="50" height="48" viewBox="0 0 50 48"><path d="M37.6 0 L49.2 10.2 L44.9 15.2 L33.3 5 Z" fill="#3a3a3a"/><path d="M31.8 6.8 L43.4 17 L17.6 42.6 L6.4 32.2 Z" fill="#3a3a3a"/><path d="M5 33.6 L16.2 44 L0.9 47.8 Z" fill="#3a3a3a"/><path d="M37.6 11.9 L12 37.4" stroke="#fff" stroke-width="1.7" opacity=".85"/></svg>
<div style="left:1473.3px;top:747px;width:323.2px;height:53px;overflow:hidden;"><div class="t" style="left:0;top:6px;font-size:39px;line-height:39px;letter-spacing:0.47px;">LEDLUX 40 stuks</div></div>
<div class="t" style="left:1798px;top:753px;font-size:39px;line-height:39px;color:#000;width:171px;text-align:right;letter-spacing:0.47px;">1,000</div>
<div class="t" style="left:1974px;top:753px;font-size:39px;line-height:39px;color:#000;width:171px;text-align:right;letter-spacing:0.47px;">7,87</div>
<div class="t" style="left:2150px;top:753px;font-size:39px;line-height:39px;color:#000;width:193px;text-align:right;letter-spacing:0.47px;">7,87</div>
<div class="t" style="left:2348px;top:753px;font-size:39px;line-height:39px;color:#000;width:215px;text-align:right;letter-spacing:0.47px;">7,87</div>
<div class="t" style="left:2860px;top:753px;font-size:39px;line-height:39px;color:#000;letter-spacing:0.47px;">N3.2</div>
<svg style="left:3070px;top:748px" width="48" height="48" viewBox="0 0 40 40"><circle cx="20" cy="20" r="20" fill="#404040"/><circle cx="20" cy="10" r="3.6" fill="#fff"/><path d="M14.5 16.5 L23 16.5 L23 28.5 L26 28.5 L26 32 L14.5 32 L14.5 28.5 L17.5 28.5 L17.5 20 L14.5 20 Z" fill="#fff"/></svg>
<div style="left:3145px;top:747px;width:633px;height:53px;overflow:hidden;"><div class="t" style="left:0;top:6px;font-size:39px;line-height:39px;letter-spacing:0.47px;">LEDLUX 40 stuks messen voor grote cutters 18 mm</div></div>
<svg style="left:140px;top:700px" width="13" height="17" viewBox="0 0 13 17"><path d="M2.5 2 L9.5 8.5 L2.5 15" stroke="#4c4c58" stroke-width="4" fill="none"/></svg>
<div style="left:124px;top:1186px;width:2058px;height:206px;border:2px solid #a8a8a8;background:#fff;"></div>
<div style="left:126px;top:1188px;width:2061px;height:49px;background:#65a5f8;"></div>
<div style="left:126px;top:1238.5px;width:2061px;height:50.5px;background:#f5f5f5;"></div>
<div style="left:126px;top:1337px;width:2061px;height:53px;background:#f5f5f5;"></div>
<div style="left:169px;top:1188px;width:3px;height:49px;background:#fff;"></div>
<div style="left:169px;top:1289px;width:3px;height:48px;background:#f8f8f8;"></div>
<div style="left:499px;top:1188px;width:3px;height:49px;background:#fff;"></div>
<div style="left:499px;top:1289px;width:3px;height:48px;background:#f8f8f8;"></div>
<div style="left:1665px;top:1188px;width:3px;height:49px;background:#fff;"></div>
<div style="left:1665px;top:1289px;width:3px;height:48px;background:#f8f8f8;"></div>
<div class="t" style="left:166px;top:1193.6px;font-size:37.4px;line-height:37.4px;color:#fff;width:330px;text-align:center;">Conto</div>
<div class="t" style="left:496px;top:1193.6px;font-size:37.4px;line-height:37.4px;color:#fff;width:1166px;text-align:center;">Descrizione conto</div>
<div class="t" style="left:1662px;top:1193.6px;font-size:37.4px;line-height:37.4px;color:#fff;width:521px;text-align:center;">Importo</div>
<div style="left:124px;top:1422px;width:1956px;height:200px;border:2px solid #a8a8a8;background:#fff;"></div>
<div style="left:126px;top:1424.5px;width:1958px;height:48px;background:#65a5f8;"></div>
<div style="left:126px;top:1474px;width:1958px;height:51px;background:#f5f5f5;"></div>
<div style="left:126px;top:1573px;width:1958px;height:19px;background:#f5f5f5;"></div>
<div style="left:169px;top:1424.5px;width:3px;height:48px;background:#fff;"></div>
<div style="left:169px;top:1525px;width:3px;height:48px;background:#f8f8f8;"></div>
<div style="left:697px;top:1424.5px;width:3px;height:48px;background:#fff;"></div>
<div style="left:697px;top:1525px;width:3px;height:48px;background:#f8f8f8;"></div>
<div style="left:1071px;top:1424.5px;width:3px;height:48px;background:#fff;"></div>
<div style="left:1071px;top:1525px;width:3px;height:48px;background:#f8f8f8;"></div>
<div style="left:1401px;top:1424.5px;width:3px;height:48px;background:#fff;"></div>
<div style="left:1401px;top:1525px;width:3px;height:48px;background:#f8f8f8;"></div>
<div class="t" style="left:166px;top:1429.2px;font-size:37.4px;line-height:37.4px;color:#fff;width:528px;text-align:center;">Condizioni pag.</div>
<div class="t" style="left:694px;top:1429.2px;font-size:37.4px;line-height:37.4px;color:#fff;width:374px;text-align:center;">Importo pag.</div>
<div class="t" style="left:1068px;top:1429.2px;font-size:37.4px;line-height:37.4px;color:#fff;width:330px;text-align:center;">Scadenza</div>
<div class="t" style="left:1398px;top:1429.2px;font-size:37.4px;line-height:37.4px;color:#fff;width:682px;text-align:center;">Modalità pag.</div>
<div class="t" style="left:173.5px;top:1481px;font-size:37.4px;line-height:37.4px;color:#000;">Pagamento completo</div>
<div class="t" style="left:698px;top:1481px;font-size:37.4px;line-height:37.4px;color:#000;width:360px;text-align:right;">15,89</div>
<div class="t" style="left:1406px;top:1481px;font-size:37.4px;line-height:37.4px;color:#000;">Carta di pagamento</div>
<div style="left:126px;top:1592px;width:1952px;height:28px;background:#f0f0f0;"></div>
<div style="left:156px;top:1596px;width:285px;height:20px;background:#c9c9c9;border:1px solid #b8b8b8;"></div>
<svg style="left:136.5px;top:1599px" width="9" height="14" viewBox="0 0 9 14"><path d="M9 0 L0 7 L9 14 Z" fill="#8a8a8a"/></svg>
<div style="left:1998px;top:1190px;width:1808px;height:294px;border:2px solid #a8a8a8;background:#fff;"></div>
<div style="left:2000px;top:1192px;width:1776px;height:48.5px;background:#65a5f8;"></div>
<div style="left:2000px;top:1242px;width:1776px;height:51px;background:#f5f5f5;"></div>
<div style="left:2000px;top:1341px;width:1776px;height:52px;background:#f5f5f5;"></div>
<div style="left:2000px;top:1441px;width:1776px;height:13px;background:#f5f5f5;"></div>
<div style="left:2306px;top:1192px;width:3px;height:48.5px;background:#fff;"></div>
<div style="left:2306px;top:1293px;width:3px;height:48px;background:#f8f8f8;"></div>
<div style="left:2306px;top:1393px;width:3px;height:48px;background:#f8f8f8;"></div>
<div style="left:2703px;top:1192px;width:3px;height:48.5px;background:#fff;"></div>
<div style="left:2703px;top:1293px;width:3px;height:48px;background:#f8f8f8;"></div>
<div style="left:2703px;top:1393px;width:3px;height:48px;background:#f8f8f8;"></div>
<div style="left:2857px;top:1192px;width:3px;height:48.5px;background:#fff;"></div>
<div style="left:2857px;top:1293px;width:3px;height:48px;background:#f8f8f8;"></div>
<div style="left:2857px;top:1393px;width:3px;height:48px;background:#f8f8f8;"></div>
<div style="left:3033px;top:1192px;width:3px;height:48.5px;background:#fff;"></div>
<div style="left:3033px;top:1293px;width:3px;height:48px;background:#f8f8f8;"></div>
<div style="left:3033px;top:1393px;width:3px;height:48px;background:#f8f8f8;"></div>
<div style="left:3209px;top:1192px;width:3px;height:48.5px;background:#fff;"></div>
<div style="left:3209px;top:1293px;width:3px;height:48px;background:#f8f8f8;"></div>
<div style="left:3209px;top:1393px;width:3px;height:48px;background:#f8f8f8;"></div>
<div style="left:3605px;top:1192px;width:3px;height:48.5px;background:#fff;"></div>
<div style="left:3605px;top:1293px;width:3px;height:48px;background:#f8f8f8;"></div>
<div style="left:3605px;top:1393px;width:3px;height:48px;background:#f8f8f8;"></div>
<div class="t" style="left:2303.5px;top:1198.2px;font-size:37.4px;line-height:37.4px;color:#fff;width:397px;text-align:center;">Imponibile</div>
<div class="t" style="left:2700.5px;top:1198.2px;font-size:37.4px;line-height:37.4px;color:#fff;width:154px;text-align:center;">Es.</div>
<div class="t" style="left:2854.5px;top:1198.2px;font-size:37.4px;line-height:37.4px;color:#fff;width:176px;text-align:center;">% Iva</div>
<div class="t" style="left:3030.5px;top:1198.2px;font-size:37.4px;line-height:37.4px;color:#fff;width:176px;text-align:center;">% Ind.</div>
<div class="t" style="left:3206.5px;top:1198.2px;font-size:37.4px;line-height:37.4px;color:#fff;width:396px;text-align:center;">Imposta</div>
<div class="t" style="left:3602.5px;top:1198.2px;font-size:37.4px;line-height:37.4px;color:#fff;width:170px;text-align:center;">Iva 11</div>
<div class="t" style="left:2400px;top:1248.5px;font-size:37.4px;line-height:37.4px;color:#000;width:290.5px;text-align:right;">15,89</div>
<div class="t" style="left:2708.5px;top:1248.5px;font-size:37.4px;line-height:37.4px;color:#000;">N3.2</div>
<div style="left:3776px;top:1192px;width:28px;height:262px;background:#f3f3f3;"></div>
<svg style="left:3783px;top:1203.25px" width="14" height="7.5" viewBox="0 0 14 7.5"><path d="M0 7.5 L7.0 0 L14 7.5 Z" fill="#8a8a8a"/></svg>
<div style="left:3780px;top:1222px;width:20px;height:32.5px;background:#c6c6c6;border:1px solid #b5b5b5;"></div>
<svg style="left:3783px;top:1431.5px" width="14" height="7" viewBox="0 0 14 7"><path d="M0 0 L7.0 7 L14 0 Z" fill="#8a8a8a"/></svg>
<div style="left:2000px;top:1454px;width:1767px;height:28px;background:#f0f0f0;"></div>
<div style="left:3767px;top:1454px;width:37px;height:28px;background:#fff;"></div>
<div style="left:2300px;top:1458.5px;width:716px;height:19.5px;background:#c9c9c9;border:1px solid #b8b8b8;"></div>
<svg style="left:3749px;top:1461px" width="8" height="14" viewBox="0 0 8 14"><path d="M0 0 L8 7 L0 14 Z" fill="#7a7a7a"/></svg>
<div style="left:1998px;top:1522px;width:1822px;height:112px;border:2px solid #a0a0a0;"></div>
<div class="t" style="left:2842.5px;top:1559px;font-size:37.4px;line-height:37.4px;color:#000;">Tot. documento</div>
<div style="left:3346px;top:1556px;width:436px;height:45.5px;background:#eee;border:2px solid #cdcdcd;box-sizing:border-box;"></div>
<div class="t" style="left:3346px;top:1560.5px;font-size:37.4px;line-height:37.4px;color:#000;width:433px;text-align:right;">15,89</div>
<div class="btn" style="left:94px;top:1702px;width:260px;height:106px;"></div>
<div class="t" style="left:94px;top:1737px;font-size:37.4px;line-height:37.4px;color:#fff;width:260px;text-align:center;">Gestione viste</div>
<div class="btn" style="left:358px;top:1702px;width:260px;height:106px;"></div>
<div class="t" style="left:358px;top:1737px;font-size:37.4px;line-height:37.4px;color:#fff;width:260px;text-align:center;">Stampa griglia</div>
<div class="btn" style="left:622px;top:1702px;width:260px;height:106px;"></div>
<div class="t" style="left:622px;top:1737px;font-size:37.4px;line-height:37.4px;color:#fff;width:260px;text-align:center;">Export griglia</div>
<div class="btn" style="left:886px;top:1702px;width:260px;height:106px;"></div>
<div class="t" style="left:886px;top:1737px;font-size:37.4px;line-height:37.4px;color:#fff;width:260px;text-align:center;">Seleziona tutto</div>
<div class="btn" style="left:1150px;top:1702px;width:260px;height:106px;"></div>
<div class="t" style="left:1150px;top:1737px;font-size:37.4px;line-height:37.4px;color:#fff;width:260px;text-align:center;">Mappature</div>
<div class="btn" style="left:1414px;top:1702px;width:260px;height:106px;"></div>
<div class="t" style="left:1414px;top:1737px;font-size:37.4px;line-height:37.4px;color:#fff;width:260px;text-align:center;">Contabilizza</div>
<div class="btn" style="left:1678px;top:1702px;width:260px;height:106px;background:#c0c0c0;"></div>
<div class="t" style="left:1678px;top:1737px;font-size:37.4px;line-height:37.4px;color:#fff;width:260px;text-align:center;">Pagamento</div>
<div class="btn" style="left:1942px;top:1702px;width:260px;height:106px;"></div>
<div class="btn" style="left:3302px;top:1702px;width:260px;height:106px;"></div>
<div class="t" style="left:3302px;top:1737px;font-size:37.4px;line-height:37.4px;color:#fff;width:260px;text-align:center;text-decoration-thickness:2px;text-underline-offset:3px;"><u>C</u>onferma</div>
<div class="btn" style="left:3566px;top:1702px;width:260px;height:106px;"></div>
<div class="t" style="left:3566px;top:1737px;font-size:37.4px;line-height:37.4px;color:#fff;width:260px;text-align:center;text-decoration-thickness:2px;text-underline-offset:3px;"><u>U</u>scita</div>
<div style="left:1952px;top:1012px;width:384px;height:786px;background:#fff;box-shadow:0 22px 30px -14px rgba(0,0,0,.2),0 48px 76px 6px rgba(0,0,0,.14),0 18px 92px 16px rgba(0,0,0,.12);"></div>
<div style="left:1952px;top:1012px;width:384px;height:59.5px;background:#65a5f8;"></div>
<div style="left:1958.5px;top:1018.5px;width:39.5px;height:39.5px;background:#fff;border:1.5px solid #9a9a9a;border-radius:4px;"></div>
<svg style="left:1964px;top:1024.5px" width="29" height="28" viewBox="0 0 29 28"><rect width="29" height="28" fill="#f3c45a"/><path d="M0 0 L14.5 15 L29 0 Z" fill="#fff"/><path d="M0 28 L14.5 13 L29 28 Z" fill="#e59a3c"/><path d="M0 0 L14.5 14 L0 28 Z" fill="#f5c860"/><path d="M29 0 L14.5 14 L29 28 Z" fill="#efb54d"/></svg>
<div class="t" style="left:2032.5px;top:1029px;font-size:27px;line-height:27px;color:#000;font-weight:bold;letter-spacing:0.8px;">ECONS - C...</div>
<div style="left:2282px;top:1026px;width:34px;height:34px;background:#65a5f8;border:2.5px solid #7487a8;"></div>
<svg style="left:2290px;top:1034px" width="18" height="18" viewBox="0 0 18 18"><path d="M3 3 L15 15 M15 3 L3 15" stroke="#d9dde8" stroke-width="5" fill="none"/></svg>
<div style="left:1978px;top:1100px;width:332px;height:152px;background:#e0477d;box-shadow:0 6px 2px -4px rgba(0,0,0,.2),0 4px 4px 0 rgba(0,0,0,.14),0 2px 10px 0 rgba(0,0,0,.12);border-radius:5px;"></div>
<div class="t" style="left:1978px;top:1158px;font-size:37.4px;line-height:37.4px;color:#fff;width:332px;text-align:center;">Altri dati</div>
<div style="left:1978px;top:1274px;width:332px;height:152px;background:#65a5f8;box-shadow:0 6px 2px -4px rgba(0,0,0,.2),0 4px 4px 0 rgba(0,0,0,.14),0 2px 10px 0 rgba(0,0,0,.12);border-radius:5px;"></div>
<div class="t" style="left:1978px;top:1332px;font-size:37.4px;line-height:37.4px;color:#fff;width:332px;text-align:center;">Anteprima</div>
<div style="left:1978px;top:1450px;width:332px;height:152px;background:#4166b0;box-shadow:0 6px 2px -4px rgba(0,0,0,.2),0 4px 4px 0 rgba(0,0,0,.14),0 2px 10px 0 rgba(0,0,0,.12);border-radius:5px;"></div>
<div class="t" style="left:1978px;top:1486px;font-size:37.4px;line-height:37.4px;color:#fff;width:332px;text-align:center;">Personalizza</div>
<div class="t" style="left:1978px;top:1528.5px;font-size:37.4px;line-height:37.4px;color:#fff;width:332px;text-align:center;">funzioni</div>
<div style="left:1978px;top:1624px;width:332px;height:152px;background:#dd9742;box-shadow:0 6px 2px -4px rgba(0,0,0,.2),0 4px 4px 0 rgba(0,0,0,.14),0 2px 10px 0 rgba(0,0,0,.12);border-radius:5px;"></div>
<div class="t" style="left:1978px;top:1682px;font-size:37.4px;line-height:37.4px;color:#fff;width:332px;text-align:center;">Uscita</div>
<svg style="left:0;top:0" width="3840" height="1858" viewBox="0 0 3840 1858"><path d="M1508 1226.8 L2003 1334.3" stroke="#e81c24" stroke-width="9" stroke-linecap="round" fill="none"/><path d="M2033.2 1339 L1992 1348.4 L2003.5 1333 L2000 1314.8 Z" fill="#e81c24"/></svg>
</body></html>
